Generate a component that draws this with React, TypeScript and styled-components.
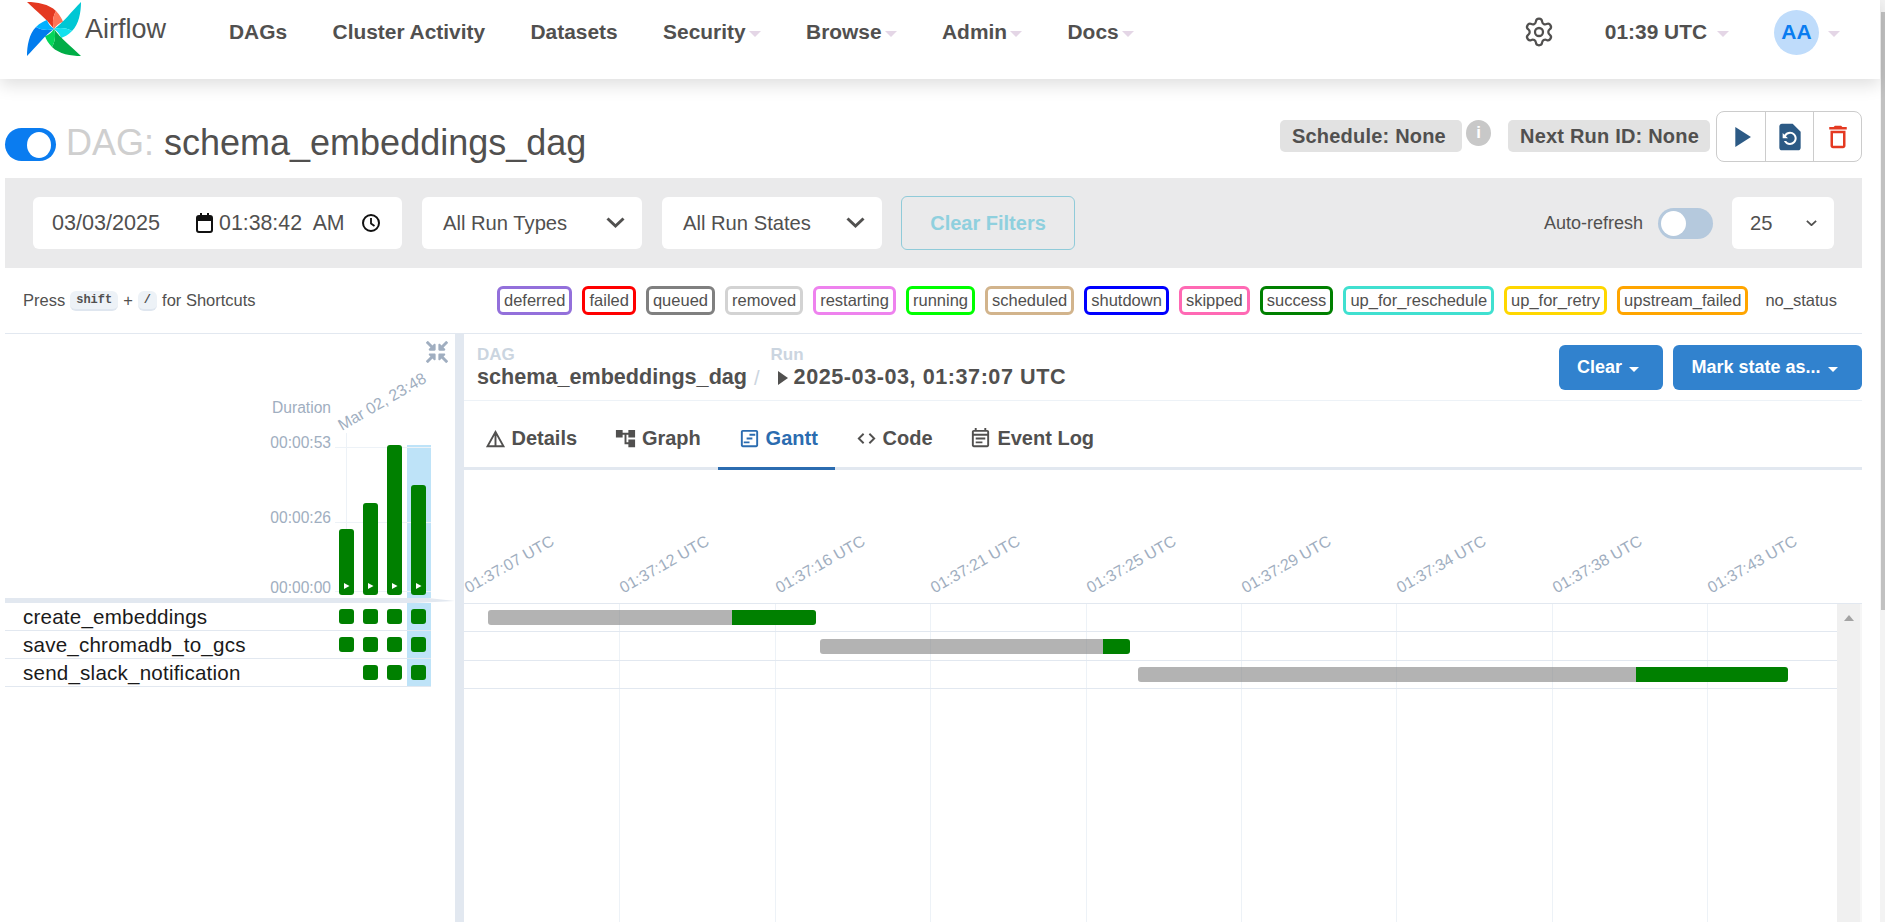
import React from 'react'
import styled, { createGlobalStyle } from 'styled-components'
import { Settings } from 'lucide-react'
import { BiCode } from 'react-icons/bi'
import { FaCompressArrowsAlt } from 'react-icons/fa'
import {
	MdAccountTree,
	MdDeleteOutline,
	MdDetails,
	MdOutlineEventNote,
	MdOutlineViewTimeline,
	MdPlayArrow,
	MdRestorePage,
} from 'react-icons/md'

const GlobalStyle = createGlobalStyle`
	html, body {
		margin: 0;
		height: 100%;
		overflow: hidden;
		background: #fff;
		font-family: "Liberation Sans", Arial, sans-serif;
		color: #51504f;
	}
	* { box-sizing: border-box; }
`

const Page = styled.div`
	display: flex;
	width: 1885px;
	height: 922px;
	overflow: hidden;
`

const Column = styled.div`
	width: 1880px;
	height: 922px;
	display: flex;
	flex-direction: column;
`

const PageScrollTrack = styled.div`
	width: 5px;
	padding: 12px 0 312px 1px;
	background: #f3f3f3;
`

const PageScrollThumb = styled.div`
	height: 100%;
	background: #c1c1c1;
`

const Header = styled.header`
	position: relative;
	z-index: 2;
	height: 79px;
	flex: none;
	display: flex;
	align-items: center;
	padding: 0 0 15px 27px;
	background: #fff;
	box-shadow: 0 6px 16px rgba(0, 0, 0, 0.13);
`

const Brand = styled.div`
	display: flex;
	align-items: center;
	width: 202px;
	margin-bottom: 6px;
`

const BrandName = styled.span`
	margin-left: 4px;
	font-size: 27px;
	line-height: 1;
`

const NavList = styled.nav`
	display: flex;
	align-items: center;
	gap: 45.5px;
`

const NavItem = styled.span`
	display: flex;
	align-items: center;
	font-size: 20.9px;
	font-weight: 700;
`

const Caret = styled.span<{ $color?: string; $gap?: number; $size?: number }>`
	width: 0;
	height: 0;
	margin-left: ${(p) => p.$gap ?? 3}px;
	margin-top: 3px;
	border-left: ${(p) => p.$size ?? 6}px solid transparent;
	border-right: ${(p) => p.$size ?? 6}px solid transparent;
	border-top: ${(p) => p.$size ?? 6}px solid ${(p) => p.$color ?? '#e4d6e6'};
`

const HeaderRight = styled.div`
	display: flex;
	align-items: center;
	margin-left: auto;
	padding-right: 40px;
	color: #51504f;
`

const ClockText = styled.span`
	margin-left: 50px;
	font-size: 20.9px;
	font-weight: 700;
`

const Avatar = styled.span`
	width: 45px;
	height: 45px;
	margin-left: 45px;
	border-radius: 50%;
	background: #bfdcfb;
	color: #0a7cf0;
	font-size: 21px;
	font-weight: 700;
	display: flex;
	align-items: center;
	justify-content: center;
`

const TitleRow = styled.div`
	height: 99px;
	flex: none;
	margin-left: 5px;
	width: 1857px;
	display: flex;
	justify-content: space-between;
	align-items: flex-start;
`

const TitleGroup = styled.div`
	display: flex;
	align-items: center;
	height: 33px;
	margin-top: 49px;
`

const Toggle = styled.span`
	width: 51px;
	height: 33px;
	border-radius: 17px;
	background: #0a7cf0;
	display: flex;
	align-items: center;
	justify-content: flex-end;
	padding-right: 5px;
`

const ToggleKnob = styled.span`
	width: 24px;
	height: 26px;
	border-radius: 50%;
	background: #fff;
`

const Title = styled.h1`
	margin: 0 0 4px 10px;
	font-size: 36px;
	font-weight: 400;
	line-height: 1;
	white-space: pre;
`

const TitlePrefix = styled.span`
	color: #cfcfcf;
`

const MetaGroup = styled.div`
	display: flex;
	align-items: flex-start;
	margin-top: 32px;
`

const MetaPill = styled.span<{ $gap: number; $width: number }>`
	width: ${(p) => p.$width}px;
	height: 32px;
	margin-top: 9px;
	margin-left: ${(p) => p.$gap}px;
	padding-left: 12px;
	border-radius: 5px;
	background: #e2e2e2;
	font-size: 20px;
	font-weight: 700;
	letter-spacing: 0.2px;
	display: flex;
	align-items: center;
`

const InfoDot = styled.span`
	width: 25px;
	height: 26px;
	margin: 9px 0 0 4px;
	border-radius: 50%;
	background: #c8c8c8;
	color: #fff;
	font-size: 17px;
	font-weight: 700;
	display: flex;
	align-items: center;
	justify-content: center;
`

const ActionGroup = styled.div`
	display: flex;
	height: 51px;
	margin-left: 6px;
	border: 1px solid #ccc;
	border-radius: 8px;
`

const ActionButton = styled.span<{ $color: string; $width: number }>`
	width: ${(p) => p.$width}px;
	display: flex;
	align-items: center;
	justify-content: center;
	color: ${(p) => p.$color};
	& + & { border-left: 1px solid #ccc; }
`

const FilterBar = styled.div`
	height: 90px;
	flex: none;
	margin-left: 5px;
	width: 1857px;
	padding: 19px 28px;
	background: #eaeaeb;
	display: flex;
	align-items: center;
`

const FilterBox = styled.div`
	height: 52px;
	display: flex;
	align-items: center;
	background: #fff;
	border-radius: 6px;
	font-size: 20.2px;
`

const DateBox = styled(FilterBox)`
	width: 369px;
	padding-left: 19px;
	font-size: 21.6px;
`

const DateGlyph = styled.svg<{ $gap: number }>`
	flex: none;
	margin-left: ${(p) => p.$gap}px;
`

const TimeText = styled.span`
	margin-left: 6px;
	font-size: 21.3px;
	white-space: pre;
`

const SelectBox = styled(FilterBox)<{ $width: number }>`
	width: ${(p) => p.$width}px;
	margin-left: 20px;
	padding: 0 17px 0 21px;
	justify-content: space-between;
`

const PageSizeBox = styled(SelectBox)`
	margin-left: 0;
	padding-left: 18px;
`

const ClearFilters = styled.button`
	width: 174px;
	height: 54px;
	margin-left: 19px;
	border: 1px solid #90cbd9;
	border-radius: 6px;
	background: transparent;
	color: #8fd0de;
	font: 700 20px "Liberation Sans", Arial, sans-serif;
`

const RefreshGroup = styled.div`
	display: flex;
	align-items: center;
	margin-left: auto;
	font-size: 18px;
`

const RefreshSwitch = styled.span`
	width: 55px;
	height: 31px;
	margin: 0 19px 0 15px;
	padding: 3px;
	border-radius: 16px;
	background: #b5c9dd;
`

const RefreshKnob = styled.span`
	display: block;
	width: 25px;
	height: 25px;
	border-radius: 50%;
	background: #fff;
`

const LegendRow = styled.div`
	height: 66px;
	flex: none;
	margin-left: 5px;
	width: 1857px;
	padding: 0 18px;
	border-bottom: 1px solid #e2e8f0;
	display: flex;
	align-items: center;
	justify-content: space-between;
	font-size: 16.5px;
`

const Shortcuts = styled.div`
	display: flex;
	align-items: center;
	gap: 5px;
`

const Kbd = styled.kbd`
	height: 20px;
	padding: 0 6px;
	border-radius: 6px;
	border-bottom: 2px solid #dfe6ef;
	background: #edf2f7;
	font: 700 12px/18px "Liberation Mono", monospace;
	color: #51504f;
`

const Legend = styled.div`
	display: flex;
	gap: 10px;
`

const StateChip = styled.span<{ $color: string }>`
	height: 29px;
	padding: 0 4px;
	border: 3px solid ${(p) => p.$color};
	border-radius: 6px;
	line-height: 23px;
`

const Main = styled.div`
	flex: 1;
	min-height: 0;
	margin-left: 5px;
	width: 1857px;
	display: flex;
`

const GridPanel = styled.section`
	position: relative;
	width: 450px;
	flex: none;
`

const CollapseButton = styled.span`
	position: absolute;
	top: 7px;
	right: 7px;
	color: #a0aec0;
	display: flex;
`

const ChartSvg = styled.svg`
	display: block;
	font-family: "Liberation Sans", Arial, sans-serif;
`

const GridSeparator = styled.div`
	height: 5px;
	background: #e2e8f0;
	clip-path: polygon(0 0, 94% 0, 100% 60%, 91% 100%, 0 100%);
`

const TaskRow = styled.div`
	width: 426px;
	height: 28px;
	display: flex;
	border-bottom: 1px solid #e2e8f0;
`

const TaskName = styled.span`
	flex: 1;
	padding-left: 18px;
	font-size: 20.6px;
	letter-spacing: 0.2px;
	line-height: 28px;
	color: #1a1a1a;
`

const TaskCell = styled.span<{ $selected?: boolean }>`
	width: 24px;
	padding-left: 4px;
	display: flex;
	align-items: center;
	background: ${(p) => (p.$selected ? '#bee3f8' : 'transparent')};
`

const TaskSquare = styled.span`
	width: 15px;
	height: 15px;
	border-radius: 3px;
	background: #008000;
`

const Divider = styled.div`
	width: 9px;
	flex: none;
	background: #e2e8f0;
`

const DetailPanel = styled.section`
	flex: 1;
	min-width: 0;
	display: flex;
	flex-direction: column;
`

const CrumbBar = styled.div`
	height: 67px;
	flex: none;
	padding: 12px 0 0 13px;
	border-bottom: 1px solid #edf2f7;
	display: flex;
	align-items: flex-start;
`

const Crumb = styled.div`
	display: flex;
	flex-direction: column;
`

const CrumbLabel = styled.span`
	font-size: 17px;
	font-weight: 700;
	line-height: 18px;
	color: #cbd5e0;
`

const CrumbValue = styled.span<{ $spacing?: number }>`
	display: flex;
	align-items: center;
	font-size: 21.6px;
	font-weight: 700;
	line-height: 26px;
	letter-spacing: ${(p) => p.$spacing ?? 0}px;
`

const CrumbSlash = styled.span`
	margin: 21px 11px 0 7px;
	font-size: 20px;
	color: #cbd5e0;
`

const RunGlyph = styled.span`
	width: 0;
	height: 0;
	margin: 1px 6px 0 7px;
	border-top: 7px solid transparent;
	border-bottom: 7px solid transparent;
	border-left: 10px solid #51504f;
`

const CrumbActions = styled.div`
	display: flex;
	gap: 10px;
	margin: -1px 0 0 auto;
`

const ActionMenu = styled.button<{ $width: number }>`
	width: ${(p) => p.$width}px;
	height: 45px;
	padding: 0 6px 0 0;
	border: 0;
	border-radius: 6px;
	background: #3182ce;
	color: #fff;
	font: 700 18px "Liberation Sans", Arial, sans-serif;
	display: flex;
	align-items: center;
	justify-content: center;
`

const TabBar = styled.div`
	height: 69px;
	flex: none;
	display: flex;
	border-bottom: 3px solid #e2e8f0;
`

const Tab = styled.span<{ $active?: boolean }>`
	height: 69px;
	padding: 8px 17.3px 0 19.5px;
	display: flex;
	align-items: center;
	gap: 5px;
	font-size: 20px;
	font-weight: 700;
	color: ${(p) => (p.$active ? '#2b6cb0' : '#51504f')};
	border-bottom: 3px solid ${(p) => (p.$active ? '#2b6cb0' : 'transparent')};
`

const Axis = styled.div`
	height: 133px;
	flex: none;
	display: flex;
	padding-left: 6px;
`

const AxisTick = styled.div`
	width: 155.4px;
	flex: none;
	display: flex;
	align-items: flex-end;
	padding-bottom: 7px;
`

const AxisLabel = styled.span`
	font-size: 16px;
	line-height: 1;
	white-space: nowrap;
	color: #a0aec0;
	transform-origin: 0 100%;
	transform: rotate(-29.5deg);
`

const GanttBody = styled.div`
	flex: 1;
	min-height: 0;
	display: flex;
	border-top: 1px solid #e2e8f0;
`

const Timeline = styled.div`
	flex: 1;
	background: repeating-linear-gradient(
		to right,
		transparent 0,
		transparent 154.4px,
		#edf2f7 154.4px,
		#edf2f7 155.4px
	);
	background-position: 1px 0;
`

const GanttRow = styled.div`
	height: 28.4px;
	display: flex;
	align-items: center;
	border-bottom: 1px solid #e2e8f0;
`

const GanttBar = styled.div`
	display: flex;
	height: 15px;
	border-radius: 3px;
	overflow: hidden;
`

const BarSegment = styled.span<{ $kind: 'queued' | 'success' }>`
	display: block;
	background: ${(p) => (p.$kind === 'queued' ? 'rgba(128, 128, 128, 0.6)' : '#008000')};
`

const GanttScrollbar = styled.div`
	width: 25px;
	flex: none;
	padding: 11px 0 0 7px;
	background: #f0f0f0;
	border-right: 2px solid #f6f6f6;
`

const ScrollArrow = styled.span`
	display: block;
	width: 0;
	height: 0;
	border-left: 5.5px solid transparent;
	border-right: 5.5px solid transparent;
	border-bottom: 6px solid #a3a3a3;
`

const navItems = [
	{ label: 'DAGs' },
	{ label: 'Cluster Activity' },
	{ label: 'Datasets' },
	{ label: 'Security', menu: true },
	{ label: 'Browse', menu: true },
	{ label: 'Admin', menu: true },
	{ label: 'Docs', menu: true },
]

const states = [
	['deferred', 'mediumpurple'],
	['failed', 'red'],
	['queued', 'gray'],
	['removed', 'lightgrey'],
	['restarting', 'violet'],
	['running', 'lime'],
	['scheduled', 'tan'],
	['shutdown', 'blue'],
	['skipped', 'hotpink'],
	['success', 'green'],
	['up_for_reschedule', 'turquoise'],
	['up_for_retry', 'gold'],
	['upstream_failed', 'orange'],
	['no_status', 'transparent'],
]

const tasks = [
	{ name: 'create_embeddings', runs: [1, 1, 1, 1] },
	{ name: 'save_chromadb_to_gcs', runs: [1, 1, 1, 1] },
	{ name: 'send_slack_notification', runs: [0, 1, 1, 1] },
]

const runBars = [
	{ x: 334, top: 195 },
	{ x: 358, top: 169 },
	{ x: 382, top: 111 },
	{ x: 406, top: 151 },
]

const axisTicks = ['07', '12', '16', '21', '25', '29', '34', '38', '43']

// seconds from the start of the axis
const PX_PER_SECOND = 155.4 / 4.5
const ganttRows = [
	{ start: 0.695, queuedUntil: 7.76, end: 10.19 },
	{ start: 10.31, queuedUntil: 18.5, end: 19.29 },
	{ start: 19.52, queuedUntil: 33.94, end: 38.34 },
]

function Logo() {
	const blades = [
		['#e43921', '#ff7557', 0],
		['#00c7d4', '#11e1ee', 90],
		['#00ad46', '#04d659', 180],
		['#017cee', '#00b1ff', 270],
	] as const
	return (
		<svg width="54" height="54" viewBox="0 0 54 54">
			{blades.map(([main, light, angle]) => (
				<g key={angle} transform={`rotate(${angle} 27 27)`}>
					<path d="M0 0C10 0 22 2 29 9C26 14 25 21 27 27C20 17 10 10 0 0Z" fill={main} />
					<path d="M29 9C33 13 35 17 36 20C32 21 29 24 27 27C25 21 26 14 29 9Z" fill={light} />
				</g>
			))}
		</svg>
	)
}

function CalendarGlyph() {
	return (
		<DateGlyph $gap={36} width="17" height="20" viewBox="0 0 17 20">
			<rect x="1" y="3" width="15" height="16" rx="2" fill="none" stroke="#111" strokeWidth="2" />
			<rect x="1" y="3" width="15" height="5" fill="#111" />
			<rect x="4" y="0" width="2" height="4" fill="#111" />
			<rect x="11" y="0" width="2" height="4" fill="#111" />
		</DateGlyph>
	)
}

function ClockGlyph() {
	return (
		<DateGlyph $gap={17} width="18" height="18" viewBox="0 0 18 18">
			<circle cx="9" cy="9" r="8" fill="none" stroke="#111" strokeWidth="2" />
			<path d="M9 4V9.5L12.5 12" fill="none" stroke="#111" strokeWidth="1.8" />
		</DateGlyph>
	)
}

function Chevron({ size = 19 }: { size?: number }) {
	return (
		<svg width={size} height={size * 0.58} viewBox="0 0 19 11">
			<path d="M1.5 1.5L9.5 9L17.5 1.5" fill="none" stroke="#51504f" strokeWidth="3" />
		</svg>
	)
}

function DurationChart() {
	return (
		<ChartSvg width="450" height="264" viewBox="0 0 450 264">
			<rect x="402" y="111" width="24" height="153" fill="#bee3f8" />
			<g stroke="#edf2f7">
				<line x1="330" x2="426" y1="113.5" y2="113.5" />
				<line x1="330" x2="426" y1="188.5" y2="188.5" />
				<line x1="330" x2="426" y1="257.5" y2="257.5" />
				<line x1="341.5" x2="341.5" y1="99" y2="257" />
			</g>
			<g fontSize="15.6" fill="#a0aec0" textAnchor="end">
				<text x="326" y="79">Duration</text>
				<text x="326" y="114">00:00:53</text>
				<text x="326" y="189">00:00:26</text>
				<text x="326" y="259">00:00:00</text>
			</g>
			<text x="337" y="97" fontSize="16" fill="#a0aec0" transform="rotate(-30 337 97)">
				Mar 02, 23:48
			</text>
			{runBars.map((bar) => (
				<g key={bar.x}>
					<rect x={bar.x} y={bar.top} width="15" height={261 - bar.top} rx="3" fill="#008000" />
					<polygon
						points={`${bar.x + 5},249 ${bar.x + 10.5},252 ${bar.x + 5},255`}
						fill="#fff"
					/>
				</g>
			))}
		</ChartSvg>
	)
}

export default function App() {
	return (
		<Page>
			<GlobalStyle />
			<Column>
				<Header>
					<Brand>
						<Logo />
						<BrandName>Airflow</BrandName>
					</Brand>
					<NavList>
						{navItems.map((item) => (
							<NavItem key={item.label}>
								{item.label}
								{item.menu && <Caret />}
							</NavItem>
						))}
					</NavList>
					<HeaderRight>
						<Settings size={32} strokeWidth={1.7} />
						<ClockText>01:39 UTC</ClockText>
						<Caret $gap={10} />
						<Avatar>AA</Avatar>
						<Caret $gap={9} />
					</HeaderRight>
				</Header>

				<TitleRow>
					<TitleGroup>
						<Toggle>
							<ToggleKnob />
						</Toggle>
						<Title>
							<TitlePrefix>DAG: </TitlePrefix>schema_embeddings_dag
						</Title>
					</TitleGroup>
					<MetaGroup>
						<MetaPill $gap={0} $width={182}>Schedule: None</MetaPill>
						<InfoDot>i</InfoDot>
						<MetaPill $gap={17} $width={202}>Next Run ID: None</MetaPill>
						<ActionGroup>
							<ActionButton $color="#2c5a85" $width={48}>
								<MdPlayArrow size={34} />
							</ActionButton>
							<ActionButton $color="#2c5a85" $width={48}>
								<MdRestorePage size={32} />
							</ActionButton>
							<ActionButton $color="#e43921" $width={48}>
								<MdDeleteOutline size={30} />
							</ActionButton>
						</ActionGroup>
					</MetaGroup>
				</TitleRow>

				<FilterBar>
					<DateBox>
						03/03/2025
						<CalendarGlyph />
						<TimeText>01:38:42  AM</TimeText>
						<ClockGlyph />
					</DateBox>
					<SelectBox $width={220}>
						All Run Types
						<Chevron />
					</SelectBox>
					<SelectBox $width={220}>
						All Run States
						<Chevron />
					</SelectBox>
					<ClearFilters>Clear Filters</ClearFilters>
					<RefreshGroup>
						Auto-refresh
						<RefreshSwitch>
							<RefreshKnob />
						</RefreshSwitch>
						<PageSizeBox $width={102}>
							25
							<Chevron size={11} />
						</PageSizeBox>
					</RefreshGroup>
				</FilterBar>

				<LegendRow>
					<Shortcuts>
						Press <Kbd>shift</Kbd> + <Kbd>/</Kbd> for Shortcuts
					</Shortcuts>
					<Legend>
						{states.map(([state, color]) => (
							<StateChip key={state} $color={color}>
								{state}
							</StateChip>
						))}
					</Legend>
				</LegendRow>

				<Main>
					<GridPanel>
						<CollapseButton>
							<FaCompressArrowsAlt size={22} />
						</CollapseButton>
						<DurationChart />
						<GridSeparator />
						{tasks.map((task) => (
							<TaskRow key={task.name}>
								<TaskName>{task.name}</TaskName>
								{task.runs.map((ran, i) => (
									<TaskCell key={i} $selected={i === 3}>
										{ran === 1 && <TaskSquare />}
									</TaskCell>
								))}
							</TaskRow>
						))}
					</GridPanel>
					<Divider />
					<DetailPanel>
						<CrumbBar>
							<Crumb>
								<CrumbLabel>DAG</CrumbLabel>
								<CrumbValue>schema_embeddings_dag</CrumbValue>
							</Crumb>
							<CrumbSlash>/</CrumbSlash>
							<Crumb>
								<CrumbLabel>Run</CrumbLabel>
								<CrumbValue $spacing={0.55}>
									<RunGlyph />
									2025-03-03, 01:37:07 UTC
								</CrumbValue>
							</Crumb>
							<CrumbActions>
								<ActionMenu $width={104}>
									Clear
									<Caret $color="#fff" $gap={7} $size={5} />
								</ActionMenu>
								<ActionMenu $width={189}>
									Mark state as...
									<Caret $color="#fff" $gap={7} $size={5} />
								</ActionMenu>
							</CrumbActions>
						</CrumbBar>
						<TabBar>
							<Tab>
								<MdDetails size={23} />
								Details
							</Tab>
							<Tab>
								<MdAccountTree size={23} />
								Graph
							</Tab>
							<Tab $active>
								<MdOutlineViewTimeline size={23} />
								Gantt
							</Tab>
							<Tab>
								<BiCode size={23} />
								Code
							</Tab>
							<Tab>
								<MdOutlineEventNote size={23} />
								Event Log
							</Tab>
						</TabBar>
						<Axis>
							{axisTicks.map((sec) => (
								<AxisTick key={sec}>
									<AxisLabel>{`01:37:${sec} UTC`}</AxisLabel>
								</AxisTick>
							))}
						</Axis>
						<GanttBody>
							<Timeline>
								{ganttRows.map((row) => (
									<GanttRow key={row.start}>
										<GanttBar style={{ marginLeft: row.start * PX_PER_SECOND }}>
											<BarSegment
												$kind="queued"
												style={{ width: (row.queuedUntil - row.start) * PX_PER_SECOND }}
											/>
											<BarSegment
												$kind="success"
												style={{ width: (row.end - row.queuedUntil) * PX_PER_SECOND }}
											/>
										</GanttBar>
									</GanttRow>
								))}
							</Timeline>
							<GanttScrollbar>
								<ScrollArrow />
							</GanttScrollbar>
						</GanttBody>
					</DetailPanel>
				</Main>
			</Column>
			<PageScrollTrack>
				<PageScrollThumb />
			</PageScrollTrack>
		</Page>
	)
}
